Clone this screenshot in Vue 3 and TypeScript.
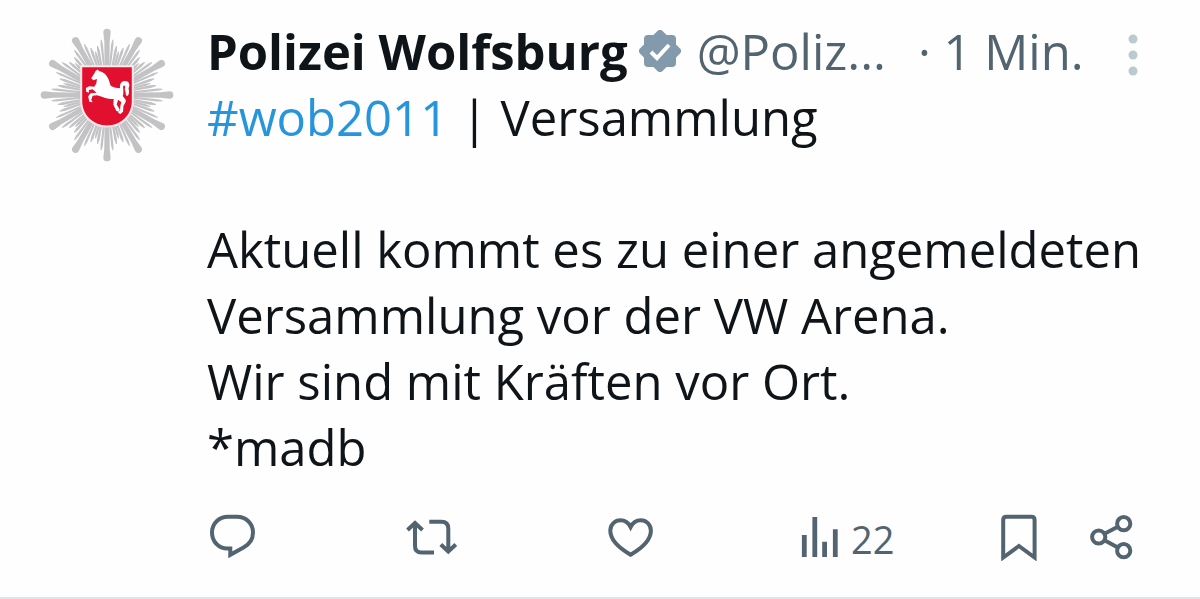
<script setup lang="ts">
interface Ray {
  angle: number
  length: number
  width: number
}

const rays: Ray[] = []
for (let i = 0; i < 12; i++) {
  const base = i * 30
  rays.push({ angle: base + 6, length: 166, width: 7 })
  rays.push({ angle: base + 24, length: 166, width: 7 })
  rays.push({ angle: base + 11, length: 149, width: 8 })
  rays.push({ angle: base + 19, length: 149, width: 8 })
  rays.push({ angle: base + 15, length: 134, width: 7 })
}
const mainRays = Array.from({ length: 12 }, (_, i) => i * 30)

const paragraphs: string[] = [
  'Aktuell kommt es zu einer angemeldeten Versammlung vor der VW Arena.',
  'Wir sind mit Kräften vor Ort.',
  '*madb',
]
const views = 22
</script>

<template>
  <article class="post">
    <a class="avatar" href="#profile" aria-label="Polizei Wolfsburg">
      <svg viewBox="-200 -200 400 400" aria-hidden="true">
        <g fill="#c3c2c4">
          <path
            v-for="ray in rays"
            :key="ray.angle"
            :transform="`rotate(${ray.angle})`"
            :d="`M-2.5 -60L${-ray.width / 2} ${-ray.length + 14}L-1.5 ${-ray.length}H1.500L${ray.width / 2} ${-ray.length + 14}L2.500 -60z`"
          />
          <path
            v-for="angle in mainRays"
            :key="angle"
            :transform="`rotate(${angle})`"
            d="M-7 -60L-8 -160L-11 -187A11 11 0 0 1 11 -187L8 -160L7 -60z"
          />
        </g>
        <path d="M-80 -89H80V18C80 67 42 97 0 97S-80 67 -80 18z" fill="#fbe9e9" />
        <path d="M-74 -83H74V18C74 62 39 91 0 91S-74 62 -74 18z" fill="#e2102f" />
        <path
          fill="#fff"
          d="M-28 -76L-23 -71C-12 -70 -2 -61 3 -50C8 -42 7 -34 12 -27C21 -21 31 -22 39 -20C37 -34 44 -43 54 -42C64 -42 69 -33 66 -25C62 -19 68 -13 65 -4C62 5 57 4 56 -3C57 -12 51 -15 54 -22C56 -28 50 -31 48 -24C49 -13 50 -4 47 3C51 10 58 13 56 20L49 33L48 50L40 57L33 53L39 46L40 31L43 22L33 14L29 28L38 43L36 50L28 48L19 29L20 12C8 12 -6 9 -15 5L-30 1L-43 2L-47 15L-43 22L-53 20L-56 4L-49 -5L-31 -7L-43 -17L-54 -15L-54 -7L-62 -10L-63 -21L-53 -26L-38 -25L-32 -34L-30 -48L-41 -44L-47 -50L-38 -64L-34 -72z"
        />
      </svg>
    </a>

    <div class="content">
      <header class="head">
        <a class="name" href="#profile">Polizei Wolfsburg</a>
        <svg class="badge" viewBox="0 0 42 42" role="img" aria-label="Verifiziert">
          <g fill="#829aab">
            <rect x="5" y="5" width="32" height="32" rx="4" />
            <rect x="5" y="5" width="32" height="32" rx="4" transform="rotate(45 21 21)" />
          </g>
          <path d="M12 22l6 6L30 15" fill="none" stroke="#fff" stroke-width="4" />
        </svg>
        <span class="handle">@Poliz...</span>
        <span class="time">· 1 Min.</span>
        <button class="more" type="button" aria-label="Mehr">
          <svg viewBox="0 0 10 42" aria-hidden="true">
            <g fill="#b9cad1">
              <circle cx="5" cy="5" r="4.5" />
              <circle cx="5" cy="21" r="4.5" />
              <circle cx="5" cy="37" r="4.5" />
            </g>
          </svg>
        </button>
      </header>

      <div class="text">
        <p class="topic"><a href="#wob2011">#wob2011</a> | Versammlung</p>
        <p v-for="line in paragraphs" :key="line">{{ line }}</p>
      </div>

      <footer class="actions">
        <button type="button" aria-label="Antworten">
          <svg width="50" height="48" viewBox="0 0 50 48">
            <path d="M21 3.800H30C39 3.800 46 10.500 46 19.500C46 26.500 42 31.500 36.500 34.500L23.300 41.800V35.500H20.500C11.500 35.500 5 28.500 5 19.500C5 10.500 12 3.800 21 3.800z" />
          </svg>
        </button>
        <button type="button" aria-label="Reposten">
          <svg width="54" height="48" viewBox="0 0 54 48">
            <path d="M2.500 17L10 10L17.500 17M10 10V33Q10 39.500 16.500 39.500H29M24.300 8.700H36.500Q43.300 8.700 43.300 15.500V38.500M35.800 31.500L43.300 38.500L50.800 31.500" />
          </svg>
        </button>
        <button type="button" aria-label="Gefällt mir">
          <svg width="54" height="48" viewBox="0 0 54 48">
            <path d="M27.600 41.800C16 35 7.300 27 7.300 17.800C7.300 11.500 12 7.300 17.500 7.300C22 7.300 25.500 9.800 27.600 14C29.700 9.800 33.200 7.300 37.700 7.300C43.200 7.300 47.900 11.500 47.900 17.800C47.900 27 39.200 35 27.600 41.800z" />
          </svg>
        </button>
        <button type="button" aria-label="22 Aufrufe">
          <svg width="38" height="48" viewBox="0 0 38 48">
            <path d="M3.300 22V44M13.800 4V44M23.600 28.700V44M34.300 16.300V44" stroke-width="4.800" />
          </svg>
          <span class="count">{{ views }}</span>
        </button>
        <button type="button" aria-label="Lesezeichen">
          <svg width="40" height="48" viewBox="0 0 40 48">
            <path d="M4.200 44.500V7Q4.200 3.800 7.400 3.800H32.400Q35.600 3.800 35.600 7V44.500L19.900 33z" />
          </svg>
        </button>
        <button type="button" aria-label="Teilen">
          <svg width="45" height="48" viewBox="0 0 45 48">
            <circle cx="9.700" cy="24" r="6.600" />
            <circle cx="34.700" cy="10.700" r="6.600" />
            <circle cx="34.700" cy="37.700" r="6.600" />
            <path d="M15.500 20.800L28.800 13.800M15.500 27.200L28.800 34.500" />
          </svg>
        </button>
      </footer>
    </div>
  </article>
</template>

<style>
body {
  margin: 0;
  background: #fefefe;
}
</style>

<style scoped>
.post {
  display: grid;
  grid-template-columns: 134px minmax(0, 1fr);
  column-gap: 33px;
  padding: 18px 57px 36px 40px;
  border-bottom: 2px solid #e1e3e4;
  font-family: "Open Sans", "Noto Sans", sans-serif;
  font-size: 49px;
  line-height: 66px;
  color: #0f1419;
}

a {
  color: inherit;
  text-decoration: none;
}

.avatar {
  padding-top: 10px;
}

.avatar svg {
  display: block;
  width: 134px;
  height: 134px;
}

.head {
  display: flex;
  align-items: center;
  height: 66px;
  color: #536471;
  white-space: nowrap;
}

.name {
  font-weight: 700;
  color: #0f1419;
}

.badge {
  flex: none;
  width: 42px;
  height: 42px;
  margin: 0 16px 0 11px;
}

.time {
  margin-left: 32px;
}

button {
  display: flex;
  align-items: center;
  padding: 0;
  border: 0;
  background: none;
  font: inherit;
  color: #536471;
  cursor: pointer;
}

.more {
  margin: 8px 5px 0 auto;
}

.more svg {
  display: block;
  width: 10px;
  height: 42px;
}

.text p {
  margin: 0;
}

.text .topic {
  margin-bottom: 66px;
}

.topic a {
  color: #2795dc;
}

.actions {
  display: grid;
  grid-template-columns: 198fr 198fr 198fr 198fr 90fr 54fr;
  margin-top: 33px;
}

.actions svg {
  flex: none;
  fill: none;
  stroke: #536471;
  stroke-width: 4;
}

.count {
  margin-left: 12px;
  padding-top: 4px;
  font-size: 38px;
  line-height: 44px;
}
</style>
